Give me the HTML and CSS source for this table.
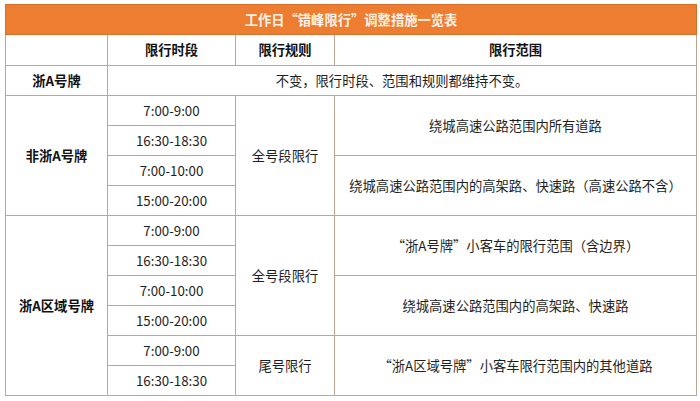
FILE: index.html
```html
<!DOCTYPE html>
<html lang="zh-CN">
<head>
<meta charset="utf-8">
<link rel="stylesheet" href="styles.css">
</head>
<body>
<div class="wrap">
<table class="tbl">
  <colgroup>
    <col class="c1"><col class="c2"><col class="c3"><col class="c4">
  </colgroup>
  <tr class="title-row"><td colspan="4" class="title">工作日“错峰限行”调整措施一览表</td></tr>
  <tr class="head-row">
    <th></th><th>限行时段</th><th>限行规则</th><th>限行范围</th>
  </tr>
  <tr class="row">
    <th>浙A号牌</th>
    <td colspan="3">不变，限行时段、范围和规则都维持不变。</td>
  </tr>
  <tr class="row">
    <th rowspan="4">非浙A号牌</th>
    <td>7:00-9:00</td>
    <td rowspan="4">全号段限行</td>
    <td rowspan="2">绕城高速公路范围内所有道路</td>
  </tr>
  <tr class="row"><td>16:30-18:30</td></tr>
  <tr class="row"><td>7:00-10:00</td><td rowspan="2">绕城高速公路范围内的高架路、快速路（高速公路不含）</td></tr>
  <tr class="row"><td>15:00-20:00</td></tr>
  <tr class="row">
    <th rowspan="6">浙A区域号牌</th>
    <td>7:00-9:00</td>
    <td rowspan="4">全号段限行</td>
    <td rowspan="2">“浙A号牌”小客车的限行范围（含边界）</td>
  </tr>
  <tr class="row"><td>16:30-18:30</td></tr>
  <tr class="row"><td>7:00-10:00</td><td rowspan="2">绕城高速公路范围内的高架路、快速路</td></tr>
  <tr class="row"><td>15:00-20:00</td></tr>
  <tr class="row"><td>7:00-9:00</td><td rowspan="2">尾号限行</td><td rowspan="2">“浙A区域号牌”小客车限行范围内的其他道路</td></tr>
  <tr class="row"><td>16:30-18:30</td></tr>
</table>
</div>
</body>
</html>
```

FILE: styles.css
```css
html, body {
  margin: 0;
  padding: 0;
  background: #ffffff;
}
.wrap {
  padding: 4px 0 0 5px;
}
.tbl {
  border-collapse: collapse;
  table-layout: fixed;
  width: 691px;
  font-family: "Noto Sans CJK SC", "Noto Sans", sans-serif;
  font-size: 13.3px;
  color: #1e1e1e;
}
.c1 { width: 102px; }
.c2 { width: 128px; }
.c3 { width: 99px; }
.c4 { width: 362px; }
.tbl td, .tbl th {
  border: 1px solid #bba594;
  text-align: center;
  vertical-align: middle;
  padding: 0;
  line-height: 16px;
}
.tbl th {
  font-weight: bold;
  color: #111;
}
.tbl td {
  font-weight: normal;
}
.title-row { height: 30px; }
.tbl .title {
  background: #ed7d31;
  color: #fdf3ea;
  font-weight: bold;
  border-color: #d9702a;
}
.head-row { height: 31px; }
.row { height: 30px; }
```
